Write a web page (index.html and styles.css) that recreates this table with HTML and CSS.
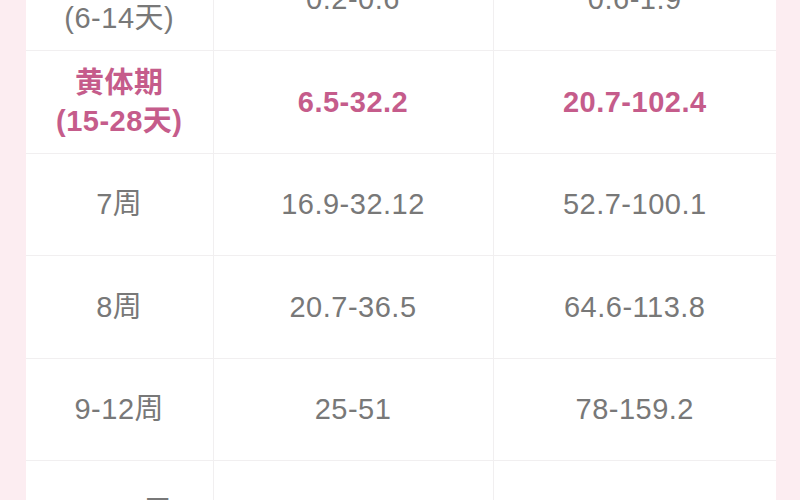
FILE: index.html
```html
<!DOCTYPE html>
<html lang="zh">
<head>
<meta charset="utf-8">
<link rel="stylesheet" href="styles.css">
</head>
<body>
<div class="page">
  <table class="chart">
    <colgroup>
      <col class="c1"><col class="c2"><col class="c3">
    </colgroup>
    <tbody>
      <tr>
        <td class="stage">卵泡期<br>(6-14天)</td>
        <td>0.2-0.6</td>
        <td>0.6-1.9</td>
      </tr>
      <tr class="hl">
        <td class="stage">黄体期<br>(15-28天)</td>
        <td>6.5-32.2</td>
        <td>20.7-102.4</td>
      </tr>
      <tr>
        <td>7周</td>
        <td>16.9-32.12</td>
        <td>52.7-100.1</td>
      </tr>
      <tr>
        <td>8周</td>
        <td>20.7-36.5</td>
        <td>64.6-113.8</td>
      </tr>
      <tr>
        <td>9-12周</td>
        <td>25-51</td>
        <td>78-159.2</td>
      </tr>
      <tr>
        <td>13-16周</td>
        <td>31.5-56.5</td>
        <td>100.2-179.7</td>
      </tr>
    </tbody>
  </table>
</div>
</body>
</html>
```

FILE: styles.css
```css
html, body {
  margin: 0;
  padding: 0;
  width: 800px;
  height: 500px;
  overflow: hidden;
  background: #fcedf1;
}

.page {
  margin: -52px 24px 0 26px;
  background: #ffffff;
}

.chart {
  width: 750px;
  border-collapse: collapse;
  table-layout: fixed;
  font-family: "Liberation Sans", "Noto Sans CJK SC", sans-serif;
  font-size: 29px;
  letter-spacing: 0.5px;
  color: #787878;
}

.c1 { width: 187px; }
.c2 { width: 280px; }
.c3 { width: 283px; }

.chart tr {
  height: 102.5px;
}

.chart td {
  padding: 0;
  text-align: center;
  vertical-align: middle;
  border-bottom: 1px solid #f1eff0;
  border-left: 1px solid #f1eff0;
  line-height: 38px;
}

.chart td:first-child {
  border-left: none;
}

.stage {
  line-height: 38px;
}

.hl td {
  color: #c55c8b;
  font-weight: bold;
}
```
